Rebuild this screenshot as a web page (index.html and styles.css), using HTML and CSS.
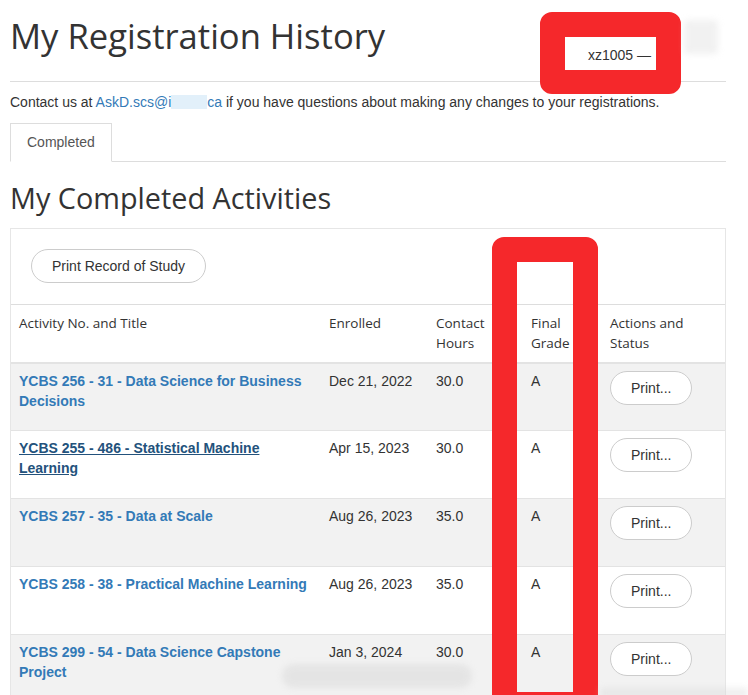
FILE: index.html
```html
<!DOCTYPE html>
<html lang="en">
<head>
  <meta charset="UTF-8">
  <title>My Registration History</title>
  <link rel="stylesheet" href="styles.css">
</head>
<body>
  <div class="page">
    <div class="page-header">
      <h1>My Registration History</h1>
    </div>
    <p class="contact">Contact us at <a href="#">AskD.scs@i<span class="smudge"></span>ca</a> if you have questions about making any changes to your registrations.</p>

    <ul class="tabs">
      <li class="active">Completed</li>
    </ul>

    <h2>My Completed Activities</h2>

    <div class="panel">
      <div class="panel-heading">
        <button class="btn">Print Record of Study</button>
      </div>
      <table class="grid">
        <colgroup>
          <col class="c-title">
          <col class="c-date">
          <col class="c-hours">
          <col class="c-grade">
          <col class="c-action">
        </colgroup>
        <thead>
          <tr>
            <th>Activity No. and Title</th>
            <th>Enrolled</th>
            <th>Contact Hours</th>
            <th>Final Grade</th>
            <th>Actions and Status</th>
          </tr>
        </thead>
        <tbody>
          <tr class="odd">
            <td><a href="#">YCBS 256 - 31 - Data Science for Business Decisions</a></td>
            <td>Dec 21, 2022</td>
            <td>30.0</td>
            <td>A</td>
            <td><button class="btn btn-sm">Print...</button></td>
          </tr>
          <tr>
            <td><a href="#" class="hover">YCBS 255 - 486 - Statistical Machine Learning</a></td>
            <td>Apr 15, 2023</td>
            <td>30.0</td>
            <td>A</td>
            <td><button class="btn btn-sm">Print...</button></td>
          </tr>
          <tr class="odd">
            <td><a href="#">YCBS 257 - 35 - Data at Scale</a></td>
            <td>Aug 26, 2023</td>
            <td>35.0</td>
            <td>A</td>
            <td><button class="btn btn-sm">Print...</button></td>
          </tr>
          <tr>
            <td><a href="#">YCBS 258 - 38 - Practical Machine Learning</a></td>
            <td>Aug 26, 2023</td>
            <td>35.0</td>
            <td>A</td>
            <td><button class="btn btn-sm">Print...</button></td>
          </tr>
          <tr class="odd">
            <td><a href="#">YCBS 299 - 54 - Data Science Capstone Project</a></td>
            <td>Jan 3, 2024</td>
            <td>30.0</td>
            <td>A</td>
            <td><button class="btn btn-sm">Print...</button></td>
          </tr>
        </tbody>
      </table>
    </div>
  </div>

  <!-- red marks drawn over the screenshot -->
  <div class="mark mark-user"><div class="user-box">xz1005 —</div></div>
  <div class="ghost ghost-top"></div>
  <div class="mark mark-grade"></div>
  <div class="ghost ghost-bottom"></div>
  <div class="ghost ghost-corner"></div>
</body>
</html>
```

FILE: styles.css
```css
*{margin:0;padding:0;box-sizing:border-box;}

body{background:#fff;color:#333;font-family:"Liberation Sans",Arial,sans-serif;font-size:14px;line-height:20px;position:relative;overflow:hidden;}
a{color:#337ab7;text-decoration:none;}

.page{width:736px;padding:0 10px;}

.page-header{border-bottom:1px solid #ddd;padding:17px 0 27px;width:716px;}
.page-header h1{font-family:"Open Sans","Noto Sans",sans-serif;font-weight:400;font-size:34.6px;line-height:37px;color:#333;}

.contact{margin-top:10px;}
.contact .smudge{display:inline-block;width:36px;height:14px;vertical-align:-2px;background:#e2f0fa;}

.tabs{list-style:none;margin-top:11px;border-bottom:1px solid #ddd;display:flex;width:716px;}
.tabs li{border:1px solid #ddd;border-bottom-color:#fff;margin-bottom:-1px;padding:8px 16px 9px;color:#555;background:#fff;}

h2{font-family:"Open Sans","Noto Sans",sans-serif;font-weight:400;font-size:28.8px;line-height:34px;margin-top:19px;color:#333;}

.panel{margin-top:13px;border:1px solid #e6e6e6;width:716px;}
.panel-heading{padding:20px 20px 21px;}

.btn{font-family:"Liberation Sans",Arial,sans-serif;font-size:14px;line-height:20px;color:#333;background:#fff;border:1px solid #ccc;border-radius:17px;padding:6px 20px;}
.btn-sm{padding:6px 20px;}

.grid{border-collapse:collapse;width:714px;table-layout:fixed;}
.grid col.c-title{width:310px;}
.grid col.c-date{width:107px;}
.grid col.c-hours{width:95px;}
.grid col.c-grade{width:79px;}
.grid col.c-action{width:123px;}
.grid th{font-family:"Open Sans","Noto Sans",sans-serif;font-weight:500;font-size:13.5px;text-align:left;vertical-align:top;padding:8px 8px 8px;height:58px;border-top:1px solid #ddd;border-bottom:2px solid #e3e3e3;color:#333;}
.grid td{vertical-align:top;padding:7px 8px 8px;height:68px;border-top:1px solid #e3e3e3;}
.grid td a{font-weight:bold;}
.grid td a.hover{color:#23527c;text-decoration:underline;}
.grid td .btn{margin-top:0;}
.grid tr.odd td{background:#f2f2f2;}

.mark{position:absolute;border:25px solid #f5282b;border-radius:12px;}
.mark-user{left:540px;top:12px;width:141px;height:82px;}
.user-box{background:#fff;height:33px;padding:8px 0 0 23px;white-space:nowrap;overflow:hidden;}
.mark-grade{left:492px;top:237px;width:106px;height:480px;}

.ghost{position:absolute;background:#d8d8d8;filter:blur(3px);opacity:0.7;}
.ghost-top{left:684px;top:20px;width:34px;height:34px;border-radius:4px;opacity:0.35;}
.ghost-bottom{left:282px;top:664px;width:190px;height:24px;border-radius:12px;opacity:0.5;}
.ghost-corner{left:600px;top:688px;width:148px;height:10px;opacity:0.4;}
```
